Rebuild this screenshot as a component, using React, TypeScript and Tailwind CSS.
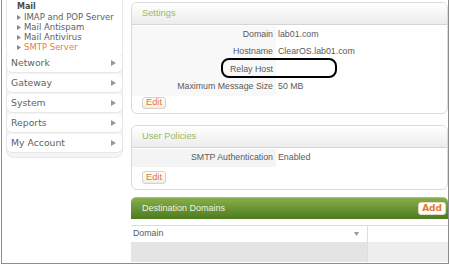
import React from "react";

const Tri = () => (
  <svg width="4" height="5" viewBox="0 0 4 5" className="shrink-0">
    <path d="M0 0 L4 2.5 L0 5 Z" fill="#888" />
  </svg>
);

const Arrow = () => (
  <svg width="5" height="6" viewBox="0 0 5 6">
    <path d="M0 0 L5 3 L0 6 Z" fill="#999" />
  </svg>
);

const EditBtn = ({ h }: { h: string }) => (
  <span
    className={`inline-flex items-center ${h} px-[3px] rounded-[3px] border border-[#d9d0c8] bg-gradient-to-b from-white to-[#f3ede8] text-[#e27a30] text-[9.3px] leading-none`}
  >
    Edit
  </span>
);

export default function App() {
  const sub = ["IMAP and POP Server", "Mail Antispam", "Mail Antivirus"];
  const nav = ["Network", "Gateway", "System", "Reports", "My Account"];
  const rows: [string, string][] = [
    ["Domain", "lab01.com"],
    ["Hostname", "ClearOS.lab01.com"],
    ["Relay Host", ""],
    ["Maximum Message Size", "50 MB"],
  ];
  return (
    <div
      className="w-[450px] h-[265px] bg-white overflow-hidden relative"
      style={{ fontFamily: "'Liberation Sans', Arial, sans-serif" }}
    >
      <div className="ml-px w-[448px] h-[264px] border-x border-b border-[#8e8e8e] flex overflow-hidden">
        {/* Sidebar */}
        <div className="w-[129px] shrink-0 pl-[4px]" style={{ fontFamily: "'DejaVu Sans', Verdana, sans-serif" }}>
          <div className="w-[117px] bg-[#f5f5f5] border-x border-b border-[#e8e8e8] rounded-b-[8px] pb-[3px]">
            <div className="bg-white pl-[10px] pt-[2px] pb-[2px]">
              <div className="h-[10px] leading-[10px] text-[8px] font-bold text-[#4a4a4a]">Mail</div>
              {sub.map((s) => (
                <div key={s} className="h-[10px] flex items-center gap-[3px] text-[8.5px] text-[#5e5e5e]">
                  <Tri />
                  <span className="leading-[10px]">{s}</span>
                </div>
              ))}
              <div className="h-[10px] flex items-center gap-[3px] text-[8.5px] text-[#e4813c]">
                <Tri />
                <span className="leading-[10px]">SMTP Server</span>
              </div>
            </div>
            {nav.map((n) => (
              <div
                key={n}
                className="h-[18px] mb-[2px] flex items-center justify-between pl-[4px] pr-[6px] bg-white rounded-[5px] shadow-[0_1px_1px_rgba(0,0,0,0.06)] text-[9.3px] text-[#626262]"
              >
                <span>{n}</span>
                <Arrow />
              </div>
            ))}
          </div>
        </div>

        {/* Main */}
        <div className="w-[317px] shrink-0 text-[8.8px] text-[#5a5a5a]">
          {/* Settings */}
          <div className="mt-[2px] border border-[#dadada] rounded-[6px] overflow-hidden">
            <div className="h-[22px] border-b border-[#d4d4d4] bg-gradient-to-b from-white to-[#ececec] flex items-center pl-[10px] text-[9.3px] text-[#9bb866]">
              Settings
            </div>
            <div className="pt-[0.5px]">
              {rows.map(([l, v]) => (
                <div key={l} className="h-[17.5px] flex items-center">
                  <div className="w-[144px] h-full bg-[#f8f8f8] flex items-center justify-end pr-[3px]">{l}</div>
                  <div className="pl-[2px]">{v}</div>
                </div>
              ))}
            </div>
            <div className="pl-[10px] pt-[1.5px] pb-[4px] flex">
              <EditBtn h="h-[12px]" />
            </div>
          </div>

          {/* User Policies */}
          <div className="mt-[11px] border border-[#dadada] rounded-[6px] overflow-hidden">
            <div className="h-[22px] border-b border-[#d4d4d4] bg-gradient-to-b from-white to-[#ececec] flex items-center pl-[10px] text-[9.3px] text-[#9bb866]">
              User Policies
            </div>
            <div className="pt-[1px]">
              <div className="h-[18px] flex items-center">
                <div className="w-[144px] h-full bg-[#f4f4f4] flex items-center justify-end pr-[3px]">SMTP Authentication</div>
                <div className="pl-[2px]">Enabled</div>
              </div>
            </div>
            <div className="pl-[10px] pt-[4px] pb-[5px] flex">
              <EditBtn h="h-[13px]" />
            </div>
          </div>

          {/* Destination Domains */}
          <div className="mt-[7px]">
            <div className="h-[22px] rounded-t-[5px] bg-gradient-to-b from-[#88ae4b] to-[#4c7b1e] border-t border-[#a8c778] flex items-center justify-between pl-[11px] pr-[2px]">
              <span className="text-[#eef4e4] text-[9px]">Destination Domains</span>
              <span
                className="h-[13px] px-[3px] rounded-[3px] bg-white border border-[#e8d8c8] flex items-center text-[#e27a30] text-[9px] font-bold leading-none"
                style={{ fontFamily: "'DejaVu Sans', Verdana, sans-serif" }}
              >
                Add
              </span>
            </div>
            <div className="h-[7px] bg-white border-b border-[#dcdcdc]" />
            <div className="flex h-[16px]">
              <div className="w-[237px] border-r border-[#dedede] flex items-center justify-between pl-[2px] pr-[8px] bg-white">
                <span>Domain</span>
                <svg width="5" height="4" viewBox="0 0 5 4">
                  <path d="M0 0 L5 0 L2.5 4 Z" fill="#999" />
                </svg>
              </div>
              <div className="flex-1 bg-white" />
            </div>
            <div className="flex h-[20px]">
              <div className="w-[237px] bg-[#e4e4e4] border-r border-[#dedede]" />
              <div className="flex-1 bg-[#eeeeee]" />
            </div>
          </div>
        </div>
      </div>

      {/* Relay host highlight */}
      <div className="absolute left-[221px] top-[58px] w-[116px] h-[20px] border-2 border-black rounded-[8px]" />
    </div>
  );
}
